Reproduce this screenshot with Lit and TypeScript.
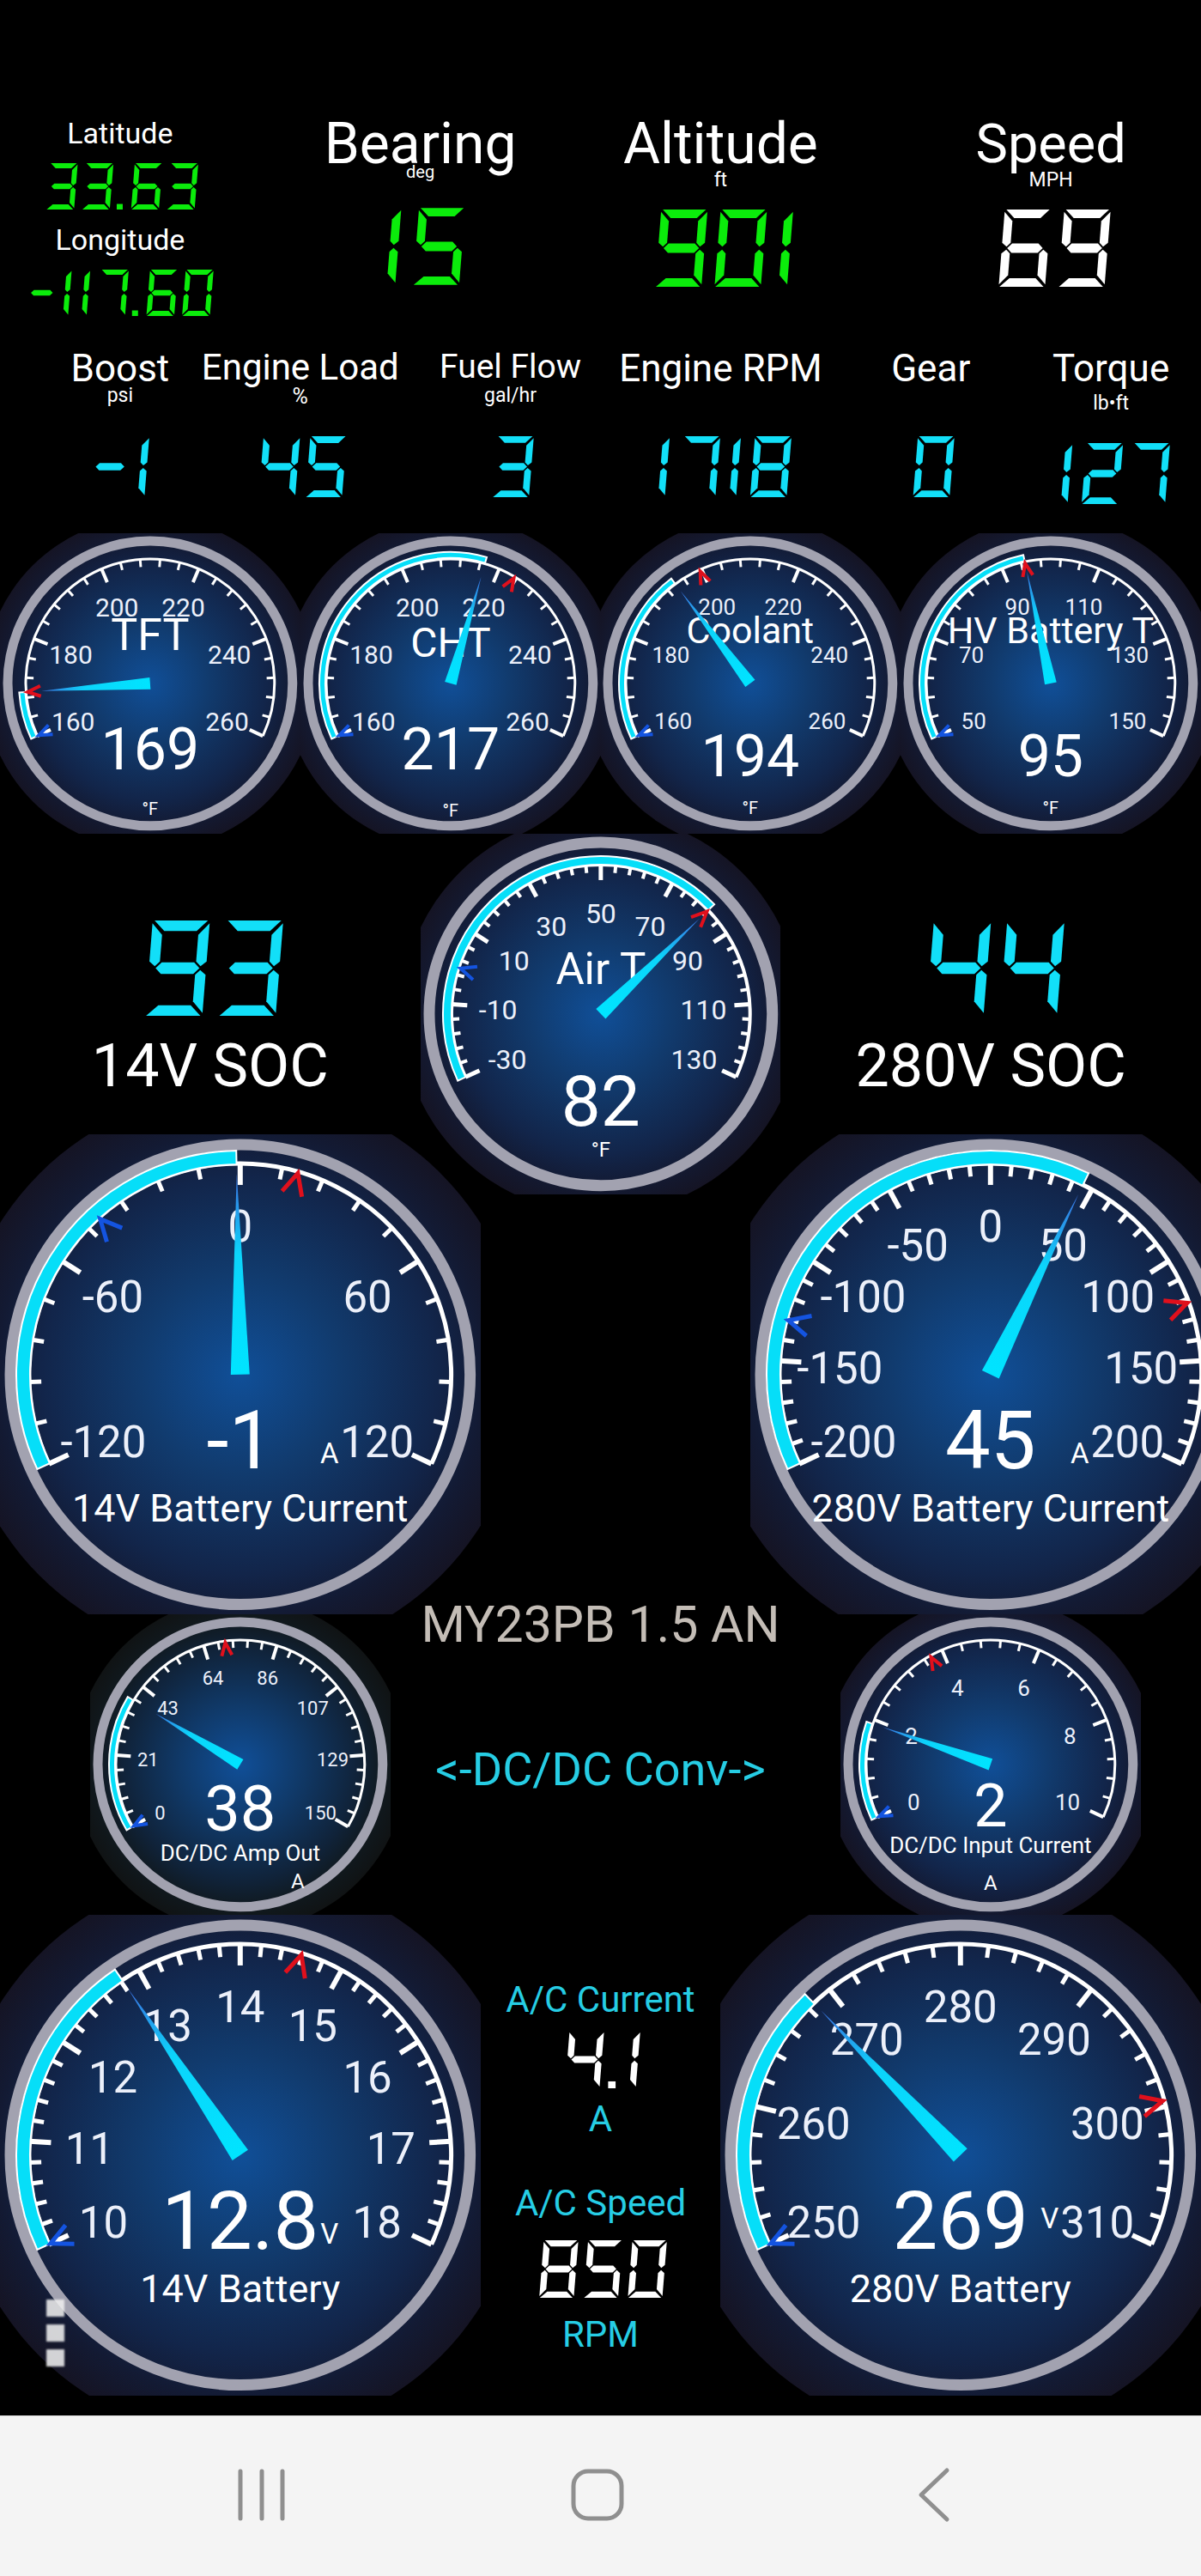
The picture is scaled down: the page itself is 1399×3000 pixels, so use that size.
import { LitElement, html, svg, css, nothing } from "lit";
import { customElement, property } from "lit/decorators.js";
import { classMap } from "lit/directives/class-map.js";

type Point = [number, number];

/* ---------- seven-segment readout ---------- */

const SEGMENTS: Record<string, Point[]> = {
  a: [[2, 0], [58, 0], [47, 11], [13, 11]],
  b: [[60, 3], [60, 43], [54, 48], [49, 43], [49, 15]],
  c: [[54, 52], [60, 57], [60, 97], [49, 85], [49, 57]],
  d: [[1, 100], [58, 100], [47, 89], [13, 89]],
  e: [[6, 52], [11, 57], [11, 85], [0, 97], [0, 57]],
  f: [[0, 3], [11, 15], [11, 43], [6, 48], [0, 43]],
  g: [[7, 50], [13, 44], [47, 44], [53, 50], [47, 56], [13, 56]],
};

const DIGITS: Record<string, string> = {
  "0": "abcdef",
  "1": "bc",
  "2": "abged",
  "3": "abgcd",
  "4": "fgbc",
  "5": "afgcd",
  "6": "afgedc",
  "7": "abc",
  "8": "abcdefg",
  "9": "abcdfg",
};

@customElement("led-readout")
export class LedReadout extends LitElement {
  @property() value = "";
  @property({ type: Number }) size = 70;

  static styles = css`
    :host { display: block; }
    .led { display: block; fill: currentColor; }
  `;

  render() {
    const shapes: Point[][] = [];
    const lean = (pts: Point[], dx: number): Point[] =>
      pts.map(([px, py]) => [px + dx + (100 - py) * 0.08, py]);
    let x = 9;
    for (const ch of this.value) {
      if (ch === "-") {
        shapes.push(lean([[0, 50], [6, 44], [41, 44], [47, 50], [41, 56], [6, 56]], x - 4));
        x += 63;
      } else if (ch === ".") {
        shapes.push([[x - 2, 88], [x + 11, 88], [x + 11, 100], [x - 2, 100]]);
        x += 29;
      } else {
        const narrow = ch === "1";
        for (const s of DIGITS[ch]) shapes.push(lean(SEGMENTS[s], narrow ? x - 43 : x));
        x += narrow ? 40 : 77;
      }
    }
    const last = this.value.slice(-1) === "1" ? 15 : 9;
    const width = x - last;
    return html`<svg class="led" role="img" aria-label=${this.value}
      width=${Math.round((width * this.size) / 100)} height=${this.size}
      viewBox="0 0 ${width} 100">
      ${shapes.map((p) => svg`<polygon points=${p.map((q) => q.join(",")).join(" ")}></polygon>`)}
    </svg>`;
  }
}

/* ---------- round gauge ---------- */

interface GaugeText { text: string; y: number; size: number; x?: number }

interface Gauge {
  area: string;
  size: number;
  labels: string[];
  labelSize: number;
  angle: number;
  start?: number;
  tip: number;
  high: number;
  low?: number;
  title: GaugeText;
  value: GaugeText;
  unit: GaugeText;
  green?: boolean;
}

/* Radii and stroke widths of the three dial sizes. */
const DIALS: Record<number, {
  halo: number; ring: number; ringWidth: number; scale: number; line: number;
  major: number; minor: number; band: [number, number]; edge: number;
  labels: number; needle: number; mark: [number, number, number];
}> = {
  350: { halo: 194, ring: 166, ringWidth: 11, scale: 145, line: 2, major: 17, minor: 9, band: [146, 153], edge: 2, labels: 99, needle: 7, mark: [15, 6, 4] },
  420: { halo: 233, ring: 200, ringWidth: 13, scale: 174, line: 3, major: 18, minor: 9, band: [174, 184], edge: 2, labels: 120, needle: 8, mark: [18, 8, 4] },
  560: { halo: 331, ring: 268, ringWidth: 13, scale: 246, line: 4, major: 25, minor: 14, band: [245, 261], edge: 2, labels: 176, needle: 11, mark: [25, 12, 5] },
};

@customElement("gauge-dial")
export class GaugeDial extends LitElement {
  @property({ attribute: false }) gauge!: Gauge;

  static styles = css`
    :host { display: block; }
    .dial { display: block; width: 100%; font-family: Roboto, "Liberation Sans", sans-serif; text-anchor: middle; }
    .ring { fill: none; stroke: #a2a2b0; }
    .scale { fill: none; stroke: #fff; }
    .band { fill: #06def8; stroke: #fff; }
    .high, .low { fill: none; stroke: #e0101c; }
    .low { stroke: #1454e0; }
    .label { fill: #ecf0fa; }
    .text { fill: #fff; }
  `;

  private at(r: number, deg: number): Point {
    const c = this.gauge.size / 2;
    const a = (deg * Math.PI) / 180;
    return [+(c + r * Math.sin(a)).toFixed(2), +(c - r * Math.cos(a)).toFixed(2)];
  }

  private marker(deg: number, cls: string, d: (typeof DIALS)[number]) {
    const c = this.gauge.size / 2;
    const [len, half, width] = d.mark;
    const top = c - d.scale + 2;
    return svg`<path class=${cls} stroke-width=${width} transform="rotate(${deg} ${c} ${c})"
      d="M${c - half} ${top + len}L${c} ${top}L${c + half} ${top + len}"></path>`;
  }

  render() {
    const g = this.gauge;
    const d = DIALS[g.size];
    const c = g.size / 2;
    const start = g.start ?? -115;
    const steps = (g.labels.length - 1) * 5;
    const [x0, y0] = this.at(d.scale, start);
    const [x1, y1] = this.at(d.scale, -start);
    const [inner, outer] = d.band;
    const large = g.angle - start > 180 ? 1 : 0;
    const b = [this.at(inner, start), this.at(outer, start), this.at(outer, g.angle), this.at(inner, g.angle)];
    const ticks = Array.from({ length: steps + 1 }, (_, i) => {
      const a = start + (i * -2 * start) / steps;
      const major = i % 5 === 0;
      const [ax, ay] = this.at(d.scale, a);
      const [bx, by] = this.at(d.scale - (major ? d.major : d.minor), a);
      return svg`<line x1=${ax} y1=${ay} x2=${bx} y2=${by} stroke-width=${major ? d.line + 2 : d.line + 1}></line>`;
    });
    const labels = g.labels.map((t, i) => {
      const [x, y] = this.at(d.labels + (g.green ? 9 : 0), start + (i * -2 * start) / (g.labels.length - 1));
      return svg`<text class="label" x=${x} y=${y + g.labelSize * 0.4 + 1} font-size=${g.labelSize}>${t}</text>`;
    });
    const line = (t: GaugeText) =>
      svg`<text class="text" x=${t.x ?? c} y=${t.y} font-size=${t.size}>${t.text}</text>`;
    return html`<svg class="dial" viewBox="0 0 ${g.size} ${g.size}" role="group" aria-label=${g.title.text}>
      <defs>
        <radialGradient id="face" gradientUnits="userSpaceOnUse" cx=${c} cy=${c} r=${d.halo}>
          <stop offset="0" stop-color="#104f98"></stop>
          <stop offset="0.35" stop-color=${g.green ? "#103a6a" : "#113b6e"}></stop>
          <stop offset="0.7" stop-color=${g.green ? "#10233a" : "#12254a"}></stop>
          <stop offset="0.86" stop-color=${g.green ? "#10191f" : "#131a33"}></stop>
          <stop offset="1" stop-color=${g.green ? "#101314" : "#151424"}></stop>
        </radialGradient>
        <linearGradient id="needle" gradientUnits="userSpaceOnUse" x1="0" y1=${c} x2="0" y2=${c - g.tip}>
          <stop offset="0" stop-color="#00e4ff"></stop>
          <stop offset="0.6" stop-color="#0cd4fb"></stop>
          <stop offset="1" stop-color="#3a6fe0"></stop>
        </linearGradient>
      </defs>
      <circle cx=${c} cy=${c} r=${d.halo} fill="url(#face)"></circle>
      <circle class="ring" cx=${c} cy=${c} r=${d.ring} stroke-width=${d.ringWidth}></circle>
      <g class="scale">
        <path stroke-width=${d.line + 1} d="M${x0} ${y0}A${d.scale} ${d.scale} 0 1 1 ${x1} ${y1}"></path>
        ${ticks}
      </g>
      <path class="band" stroke-width=${d.edge} d="M${b[0].join(" ")}L${b[1].join(" ")}A${outer} ${outer} 0 ${large} 1 ${b[2].join(" ")}L${b[3].join(" ")}A${inner} ${inner} 0 ${large} 0 ${b[0].join(" ")}Z"></path>
      ${labels}
      ${line(g.title)} ${line(g.unit)}
      ${this.marker(g.low ?? start, "low", d)}
      <path fill="url(#needle)" transform="rotate(${g.angle} ${c} ${c})"
        d="M${c - d.needle} ${c}L${c} ${c - g.tip}L${c + d.needle} ${c}Z"></path>
      ${this.marker(g.high, "high", d)}
      ${line(g.value)}
    </svg>`;
  }
}

/* ---------- data ---------- */

const TEMPS = ["160", "180", "200", "220", "240", "260"];

const GAUGES: Gauge[] = [
  { area: "tft", size: 350, labels: TEMPS, labelSize: 30, angle: -94, tip: 127, high: -94,
    title: { text: "TFT", y: 136, size: 52 }, value: { text: "169", y: 275, size: 68 }, unit: { text: "°F", y: 328, size: 20 } },
  { area: "cht", size: 350, labels: TEMPS, labelSize: 30, angle: 16, tip: 129, high: 31,
    title: { text: "CHT", y: 144, size: 48 }, value: { text: "217", y: 275, size: 68 }, unit: { text: "°F", y: 330, size: 20 } },
  { area: "coolant", size: 350, labels: TEMPS, labelSize: 26, angle: -37, tip: 135, high: -24,
    title: { text: "Coolant", y: 128, size: 43 }, value: { text: "194", y: 283, size: 68 }, unit: { text: "°F", y: 327, size: 20 } },
  { area: "hv", size: 350, labels: ["50", "70", "90", "110", "130", "150"], labelSize: 26, angle: -12, tip: 134, high: -12,
    title: { text: "HV Battery T", y: 128, size: 43 }, value: { text: "95", y: 283, size: 68 }, unit: { text: "°F", y: 327, size: 20 } },
  { area: "air", size: 420, labels: ["-30", "-10", "10", "30", "50", "70", "90", "110", "130"], labelSize: 32, angle: 46, tip: 160, high: 46, low: -72,
    title: { text: "Air T", y: 175, size: 51 }, value: { text: "82", y: 340, size: 82 }, unit: { text: "°F", y: 376, size: 24 } },
  { area: "amps14", size: 560, labels: ["-120", "-60", "0", "60", "120"], labelSize: 51, angle: -1, tip: 234, high: 16, low: -42,
    title: { text: "14V Battery Current", y: 451, size: 45 }, value: { text: "-1", y: 389, size: 94 }, unit: { text: "A", x: 384, y: 383, size: 33 } },
  { area: "amps280", size: 560, labels: ["-200", "-150", "-100", "-50", "0", "50", "100", "150", "200"], labelSize: 51, angle: 26, tip: 234, high: 70, low: -75,
    title: { text: "280V Battery Current", y: 451, size: 45 }, value: { text: "45", y: 389, size: 94 }, unit: { text: "A", x: 384, y: 383, size: 33 } },
  { area: "dcout", size: 350, labels: ["0", "21", "43", "64", "86", "107", "129", "150"], labelSize: 22, start: -120, angle: -59, tip: 115, high: -7, green: true,
    title: { text: "DC/DC Amp Out", y: 287, size: 26 }, value: { text: "38", y: 252, size: 74 }, unit: { text: "A", x: 242, y: 319, size: 24 } },
  { area: "dcin", size: 350, labels: ["0", "2", "4", "6", "8", "10"], labelSize: 26, angle: -71, tip: 133, high: -29,
    title: { text: "DC/DC Input Current", y: 278, size: 26 }, value: { text: "2", y: 247, size: 70 }, unit: { text: "A", y: 321, size: 24 } },
  { area: "volts14", size: 560, labels: ["10", "11", "12", "13", "14", "15", "16", "17", "18"], labelSize: 51, angle: -34, tip: 234, high: 17,
    title: { text: "14V Battery", y: 451, size: 45 }, value: { text: "12.8", y: 389, size: 94 }, unit: { text: "V", x: 384, y: 383, size: 33 } },
  { area: "volts280", size: 560, labels: ["250", "260", "270", "280", "290", "300", "310"], labelSize: 51, angle: -44, tip: 234, high: 75,
    title: { text: "280V Battery", y: 451, size: 45 }, value: { text: "269", y: 389, size: 94 }, unit: { text: "V", x: 384, y: 365, size: 33 } },
];

interface Meter { area: string; title: string; unit?: string; value: string; size: number; tone: string; kind: string }

const METERS: Meter[] = [
  { area: "bearing", title: "Bearing", unit: "deg", value: "15", size: 90, tone: "green", kind: "large" },
  { area: "altitude", title: "Altitude", unit: "ft", value: "901", size: 90, tone: "green", kind: "large" },
  { area: "speed", title: "Speed", unit: "MPH", value: "69", size: 90, tone: "white", kind: "large" },
  { area: "boost", title: "Boost", unit: "psi", value: "-1", size: 71, tone: "cyan", kind: "medium" },
  { area: "load", title: "Engine Load", unit: "%", value: "45", size: 71, tone: "cyan", kind: "medium" },
  { area: "fuel", title: "Fuel Flow", unit: "gal/hr", value: "3", size: 71, tone: "cyan", kind: "medium" },
  { area: "rpm", title: "Engine RPM", value: "1718", size: 71, tone: "cyan", kind: "medium" },
  { area: "gear", title: "Gear", value: "0", size: 71, tone: "cyan", kind: "medium" },
  { area: "torque", title: "Torque", unit: "lb•ft", value: "127", size: 71, tone: "cyan", kind: "medium" },
];

/* ---------- page ---------- */

@customElement("app-root")
export class AppRoot extends LitElement {
  static styles = css`
    :host {
      display: block;
      container-type: inline-size;
      overflow: hidden;
      background: #000;
      color: #fff;
      font-family: Roboto, "Liberation Sans", sans-serif;
    }
    .board {
      position: relative;
      display: grid;
      grid-template-columns: repeat(40, minmax(0, 1fr));
      grid-template-rows: repeat(79, 2.5cqw);
      padding: 27px 0 23px;
    }
    .cell { display: flex; flex-direction: column; align-items: center; white-space: nowrap; min-width: 0; }
    .green { color: #0bec0b; }
    .white { color: #fff; }
    .cyan { color: #12dff8; }

    .large, .medium { padding-bottom: 8px; }
    .large { padding-top: 2px; }
    .large .name { font-size: 66px; line-height: 68px; }
    .medium .name { font-size: 44px; line-height: 34px; }
    .unit { font-size: 23px; line-height: 24px; }
    .large .unit { margin-top: -4px; }
    .medium .unit { margin-top: 3px; }
    .large led-readout, .medium led-readout { margin-top: auto; }

    .position { grid-area: 4 / 1 / 11 / 9; padding-top: 3px; gap: 15px; }
    .position .name { font-size: 34px; line-height: 40px; }
    .bearing { grid-area: 4 / 10 / 10 / 20; padding-bottom: 10px; }
    .bearing .unit { font-size: 20px; margin-top: -14px; }
    .altitude { grid-area: 4 / 20 / 10 / 30; }
    .speed { grid-area: 4 / 31 / 10 / 41; }
    .speed .name { font-size: 63px; }
    .boost { grid-area: 12 / 2 / 17 / 8; }
    .load { grid-area: 12 / 8 / 17 / 14; }
    .load .name { font-size: 42px; line-height: 32px; }
    .load .unit { font-size: 25px; margin-top: 6px; }
    .fuel { grid-area: 12 / 15 / 17 / 21; }
    .fuel .name { font-size: 39px; line-height: 30px; }
    .fuel .unit { margin-top: 7px; }
    .rpm { grid-area: 12 / 22 / 17 / 28; }
    .gear { grid-area: 12 / 29 / 17 / 35; }
    .torque { grid-area: 12 / 35 / 17 / 41; padding-bottom: 0; }
    .torque .unit { margin-top: 12px; }

    .tft { grid-area: 18 / 1 / 28 / 11; }
    .cht { grid-area: 18 / 11 / 28 / 21; }
    .coolant { grid-area: 18 / 21 / 28 / 31; }
    .hv { grid-area: 18 / 31 / 28 / 41; }
    .air { grid-area: 28 / 15 / 40 / 27; }
    .amps14 { grid-area: 38 / 1 / 54 / 17; }
    .amps280 { grid-area: 38 / 26 / 54 / 41; width: 40cqw; }
    .dcout { grid-area: 54 / 4 / 64 / 14; }
    .dcin { grid-area: 54 / 29 / 64 / 39; }
    .volts14 { grid-area: 64 / 1 / 80 / 17; }
    .volts280 { grid-area: 64 / 25 / 80 / 41; }

    .soc { padding-top: 31px; gap: 18px; font-size: 70px; line-height: 80px; }
    .soc14 { grid-area: 30 / 1 / 37 / 15; }
    .soc280 { grid-area: 30 / 27 / 37 / 41; }

    .model { grid-area: 53 / 14 / 56 / 28; padding-top: 17px; font-size: 59px; line-height: 60px; color: #c4bdb6; }
    .converter { grid-area: 58 / 14 / 61 / 28; padding-top: 14px; font-size: 54px; line-height: 54px; color: #26cde4; }
    .ac { font-size: 42px; line-height: 40px; color: #26cde4; gap: 16px; }
    .current { grid-area: 66 / 17 / 72 / 25; padding-top: 9px; }
    .compressor { grid-area: 73 / 17 / 79 / 25; padding-top: 1px; gap: 23px; }

    .menu {
      position: absolute;
      left: 54px;
      bottom: 57px;
      display: grid;
      gap: 9px;
      padding: 0;
      border: 0;
      background: none;
      cursor: pointer;
    }
    .dot { width: 21px; height: 20px; background: rgba(238, 238, 238, 0.88); filter: blur(1px); }

    .nav {
      display: flex;
      align-items: center;
      padding: 59px 114px 62px 110px;
      border-top: 1px solid #dcdcdc;
      background: #f4f4f4;
    }
    .key { flex: 1; display: flex; justify-content: center; padding: 0; border: 0; background: none; cursor: pointer; }
    .icon { width: 65px; height: 65px; fill: none; stroke: #8f8f8f; stroke-width: 5; stroke-linecap: round; stroke-linejoin: round; }
  `;

  render() {
    return html`
      <main class="board">
        <section class="cell position">
          <div class="name">Latitude</div>
          <led-readout class="green" value="33.63" .size=${54}></led-readout>
          <div class="name">Longitude</div>
          <led-readout class="green" value="-117.60" .size=${54}></led-readout>
        </section>

        ${METERS.map((m) => html`
          <section class=${classMap({ cell: true, [m.kind]: true, [m.area]: true })}>
            <div class="name">${m.title}</div>
            ${m.unit ? html`<div class="unit">${m.unit}</div>` : nothing}
            <led-readout class=${m.tone} value=${m.value} .size=${m.size}></led-readout>
          </section>`)}

        ${GAUGES.map((g) => html`<gauge-dial class=${g.area} .gauge=${g}></gauge-dial>`)}

        <section class="cell soc soc14">
          <led-readout class="cyan" value="93" .size=${111}></led-readout>
          <div>14V SOC</div>
        </section>
        <section class="cell soc soc280">
          <led-readout class="cyan" value="44" .size=${111}></led-readout>
          <div>280V SOC</div>
        </section>

        <div class="cell model">MY23PB 1.5 AN</div>
        <div class="cell converter">&lt;-DC/DC Conv-&gt;</div>

        <section class="cell ac current">
          <div>A/C Current</div>
          <led-readout class="white" value="4.1" .size=${67}></led-readout>
          <div>A</div>
        </section>
        <section class="cell ac compressor">
          <div>A/C Speed</div>
          <led-readout class="white" value="850" .size=${67}></led-readout>
          <div>RPM</div>
        </section>

        <button class="menu" aria-label="Menu">
          <span class="dot"></span><span class="dot"></span><span class="dot"></span>
        </button>
      </main>

      <nav class="nav">
        <button class="key" aria-label="Recent apps">
          <svg class="icon" viewBox="0 0 65 65"><path d="M7 5V60M32 5V60M56 5V60"></path></svg>
        </button>
        <button class="key" aria-label="Home">
          <svg class="icon" viewBox="0 0 65 65"><rect x="3" y="5" width="56" height="55" rx="17"></rect></svg>
        </button>
        <button class="key" aria-label="Back">
          <svg class="icon" viewBox="0 0 65 65"><path d="M46 4L16 32.500L46 61"></path></svg>
        </button>
      </nav>
    `;
  }
}
